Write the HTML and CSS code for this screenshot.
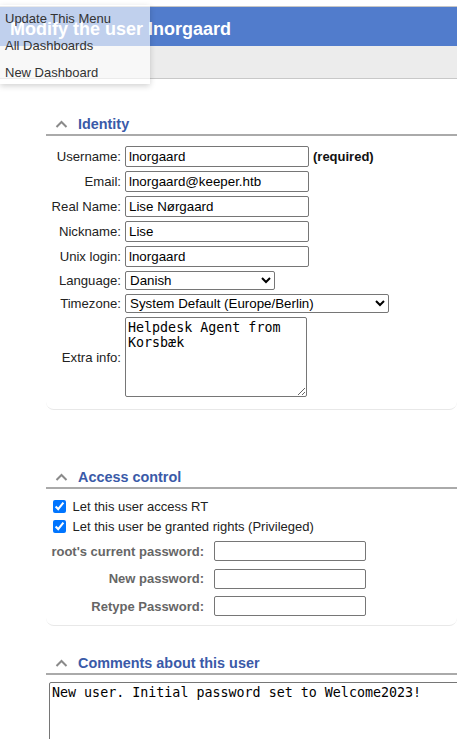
FILE: index.html
```html
<!DOCTYPE html>
<html lang="en">
<head>
<meta charset="utf-8">
<title>Modify the user lnorgaard</title>
<link rel="stylesheet" href="styles.css">
</head>
<body>
<header class="topbar">
  <div class="titlebar"><h1>Modify the user lnorgaard</h1></div>
  <div class="subbar"></div>
</header>

<nav class="menu">
  <div class="menu-item">Update This Menu</div>
  <div class="menu-item">All Dashboards</div>
  <div class="menu-item">New Dashboard</div>
</nav>

<main class="content">
  <section class="section identity">
    <div class="section-title">
      <svg class="chev" width="13" height="8" viewBox="0 0 13 8"><path d="M1.5 7 L6.5 2 L11.5 7" fill="none" stroke="#8a8a8a" stroke-width="2"/></svg>
      <span>Identity</span>
    </div>
    <div class="section-body">
      <div class="form-grid">
        <label class="lbl">Username:</label>
        <div class="field"><input class="text" type="text" value="lnorgaard"><b class="req">(required)</b></div>
        <label class="lbl">Email:</label>
        <div class="field"><input class="text" type="text" value="lnorgaard@keeper.htb"></div>
        <label class="lbl">Real Name:</label>
        <div class="field"><input class="text" type="text" value="Lise Nørgaard"></div>
        <label class="lbl">Nickname:</label>
        <div class="field"><input class="text" type="text" value="Lise"></div>
        <label class="lbl">Unix login:</label>
        <div class="field"><input class="text" type="text" value="lnorgaard"></div>
        <label class="lbl">Language:</label>
        <div class="field"><select class="select lang"><option>Danish</option></select></div>
        <label class="lbl">Timezone:</label>
        <div class="field"><select class="select tz"><option>System Default (Europe/Berlin)</option></select></div>
        <label class="lbl">Extra info:</label>
        <div class="field"><textarea class="extra">Helpdesk Agent from Korsbæk</textarea></div>
      </div>
    </div>
  </section>

  <section class="section access">
    <div class="section-title">
      <svg class="chev" width="13" height="8" viewBox="0 0 13 8"><path d="M1.5 7 L6.5 2 L11.5 7" fill="none" stroke="#8a8a8a" stroke-width="2"/></svg>
      <span>Access control</span>
    </div>
    <div class="section-body">
      <div class="checks">
        <label class="check-row"><input type="checkbox" checked><span>Let this user access RT</span></label>
        <label class="check-row"><input type="checkbox" checked><span>Let this user be granted rights (Privileged)</span></label>
      </div>
      <div class="pw-grid">
        <label class="pw-lbl">root's current password:</label>
        <input class="pw" type="password">
        <label class="pw-lbl">New password:</label>
        <input class="pw" type="password">
        <label class="pw-lbl">Retype Password:</label>
        <input class="pw" type="password">
      </div>
    </div>
  </section>

  <section class="section comments">
    <div class="section-title">
      <svg class="chev" width="13" height="8" viewBox="0 0 13 8"><path d="M1.5 7 L6.5 2 L11.5 7" fill="none" stroke="#8a8a8a" stroke-width="2"/></svg>
      <span>Comments about this user</span>
    </div>
    <textarea class="comment">New user. Initial password set to Welcome2023!</textarea>
  </section>
</main>
</body>
</html>
```
FILE: styles.css
```css
html, body {
  overflow: hidden;
}
body {
  margin: 0;
  height: 739px;
  background: #ffffff;
  color: #222;
  font-family: "Liberation Sans", Arial, sans-serif;
  font-size: 13px;
  position: relative;
}

.topbar {
  padding-top: 6px;
}
.titlebar {
  border-top: 1px solid #c6c6c6;
  background: #517ccc;
  height: 40px;
  display: flex;
  align-items: flex-start;
  padding: 12px 0 0 10px;
  box-sizing: border-box;
}
.titlebar h1 {
  margin: 0;
  font-size: 18px;
  font-weight: bold;
  color: #fff;
  line-height: 20px;
}
.subbar {
  height: 32px;
  background: #ececec;
  border-bottom: 1px solid #c8c8c8;
}

.menu {
  position: absolute;
  top: 5px;
  left: 0;
  width: 150px;
  height: 79px;
  background: rgba(255, 255, 255, 0.64);
  box-shadow: 0 2px 6px rgba(0, 0, 0, 0.18);
}
.menu-item {
  height: 27px;
  line-height: 27px;
  padding-left: 5px;
  color: #333;
  font-size: 13px;
}

.content {
  margin-left: 46px;
}
.section-title {
  display: flex;
  align-items: center;
  gap: 10px;
  height: 20px;
  padding-left: 9px;
  border-bottom: 2px solid #aaa;
  color: #3a5aa8;
  font-weight: bold;
  font-size: 14.4px;
}
.chev {
  display: block;
}
.section-body {
  border-bottom: 1px solid #e8e8e8;
  border-radius: 0 0 8px 8px;
}
.identity {
  margin-top: 35px;
}
.access {
  margin-top: 57px;
}
.comments {
  margin-top: 27px;
}

.form-grid {
  display: grid;
  grid-template-columns: 75px auto;
  column-gap: 4px;
  row-gap: 4px;
  align-items: center;
  padding: 10px 0 12px 0;
}
.lbl {
  text-align: right;
  white-space: nowrap;
  font-size: 13.15px;
}
.field {
  display: flex;
  align-items: center;
  gap: 4px;
}
.req {
  font-weight: bold;
  color: #111;
}
.text {
  width: 184px;
  height: 21px;
  box-sizing: border-box;
  border: 1px solid #767676;
  border-radius: 2px;
  padding: 1px 3px;
  margin: 0;
  font-family: "Liberation Sans", Arial, sans-serif;
  font-size: 13.33px;
  color: #000;
  background: #fff;
}
.select {
  height: 19px;
  box-sizing: border-box;
  border: 1px solid #767676;
  border-radius: 2px;
  margin: 0;
  font-family: "Liberation Sans", Arial, sans-serif;
  font-size: 13.33px;
  color: #000;
  background: #fff;
}
.lang {
  width: 150px;
}
.tz {
  width: 264px;
}
.extra {
  width: 182px;
  height: 80px;
  box-sizing: border-box;
  margin: 0;
  padding: 2px;
  border: 1px solid #767676;
  border-radius: 2px;
  font-family: "DejaVu Sans Mono", monospace;
  font-size: 13.33px;
  color: #000;
}

.checks {
  display: flex;
  flex-direction: column;
  padding: 7px 0 0 7px;
}
.check-row {
  display: flex;
  align-items: center;
  gap: 6.5px;
  height: 20px;
  color: #222;
}
.check-row input {
  margin: 0;
  width: 13px;
  height: 13px;
}
.pw-grid {
  display: grid;
  grid-template-columns: 158px 152px;
  column-gap: 10px;
  row-gap: 7.5px;
  align-items: center;
  margin-top: 5px;
  padding-bottom: 9px;
}
.pw-lbl {
  text-align: right;
  font-weight: bold;
  color: #666;
  white-space: nowrap;
}
.pw {
  width: 152px;
  height: 20px;
  box-sizing: border-box;
  border: 1px solid #767676;
  border-radius: 2px;
  margin: 0;
  padding: 1px 3px;
  background: #fff;
}

.comment {
  display: block;
  margin: 7px 0 0 3px;
  width: 600px;
  height: 100px;
  box-sizing: border-box;
  padding: 2px;
  border: 1px solid #767676;
  border-radius: 2px;
  font-family: "DejaVu Sans Mono", monospace;
  font-size: 13.33px;
  color: #000;
  resize: none;
}
```
